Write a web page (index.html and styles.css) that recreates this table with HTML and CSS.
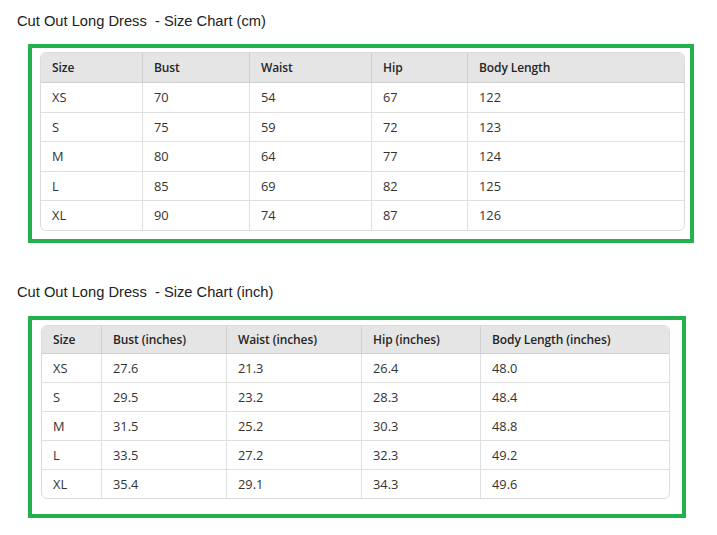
FILE: index.html
```html
<!DOCTYPE html>
<html lang="en">
<head>
<meta charset="utf-8">
<title>Cut Out Long Dress - Size Chart</title>
<link rel="stylesheet" href="styles.css">
</head>
<body>
<div class="page">
  <h2 class="title title-cm">Cut Out Long Dress&nbsp; - Size Chart (cm)</h2>
  <div class="frame frame-cm">
    <table class="chart chart-cm">
      <colgroup><col><col><col><col><col></colgroup>
      <thead>
        <tr><th>Size</th><th>Bust</th><th>Waist</th><th>Hip</th><th>Body Length</th></tr>
      </thead>
      <tbody>
        <tr><td>XS</td><td>70</td><td>54</td><td>67</td><td>122</td></tr>
        <tr><td>S</td><td>75</td><td>59</td><td>72</td><td>123</td></tr>
        <tr><td>M</td><td>80</td><td>64</td><td>77</td><td>124</td></tr>
        <tr><td>L</td><td>85</td><td>69</td><td>82</td><td>125</td></tr>
        <tr><td>XL</td><td>90</td><td>74</td><td>87</td><td>126</td></tr>
      </tbody>
    </table>
  </div>

  <h2 class="title title-inch">Cut Out Long Dress&nbsp; - Size Chart (inch)</h2>
  <div class="frame frame-inch">
    <table class="chart chart-inch">
      <colgroup><col><col><col><col><col></colgroup>
      <thead>
        <tr><th>Size</th><th>Bust (inches)</th><th>Waist (inches)</th><th>Hip (inches)</th><th>Body Length (inches)</th></tr>
      </thead>
      <tbody>
        <tr><td>XS</td><td>27.6</td><td>21.3</td><td>26.4</td><td>48.0</td></tr>
        <tr><td>S</td><td>29.5</td><td>23.2</td><td>28.3</td><td>48.4</td></tr>
        <tr><td>M</td><td>31.5</td><td>25.2</td><td>30.3</td><td>48.8</td></tr>
        <tr><td>L</td><td>33.5</td><td>27.2</td><td>32.3</td><td>49.2</td></tr>
        <tr><td>XL</td><td>35.4</td><td>29.1</td><td>34.3</td><td>49.6</td></tr>
      </tbody>
    </table>
  </div>
</div>
</body>
</html>
```

FILE: styles.css
```css
html, body {
  margin: 0;
  padding: 0;
  background: #ffffff;
}

.page {
  padding: 13px 0 0 16px;
}

.title {
  margin: 0 0 0 1px;
  font-family: "Liberation Sans", Arial, sans-serif;
  font-size: 14.7px;
  font-weight: normal;
  line-height: 16px;
  color: #222222;
}

.title-inch {
  margin-top: 41px;
}

.frame {
  box-sizing: border-box;
  margin-left: 12px;
  border: 4px solid #22b14c;
}

.frame-cm {
  margin-top: 15px;
  width: 666px;
  padding: 4px 7px 8px 8px;
}

.frame-inch {
  margin-top: 16px;
  width: 658px;
  padding: 5px 14px 15px 9px;
}

.chart {
  border-collapse: separate;
  border-spacing: 0;
  table-layout: fixed;
  border: 1px solid #dcdcdc;
  border-radius: 6px;
  overflow: hidden;
  font-family: "Open Sans", "Noto Sans", sans-serif;
  font-size: 12.8px;
  color: #333333;
}

.chart-cm { width: 643px; }
.chart-inch { width: 627px; }

.chart-cm col:nth-child(1) { width: 102px; }
.chart-cm col:nth-child(2) { width: 107px; }
.chart-cm col:nth-child(3) { width: 122px; }
.chart-cm col:nth-child(4) { width: 96px; }
.chart-cm col:nth-child(5) { width: 216px; }

.chart-inch col:nth-child(1) { width: 60px; }
.chart-inch col:nth-child(2) { width: 125px; }
.chart-inch col:nth-child(3) { width: 135px; }
.chart-inch col:nth-child(4) { width: 119px; }
.chart-inch col:nth-child(5) { width: 188px; }

.chart th,
.chart td {
  padding: 0 11px;
  text-align: left;
  vertical-align: middle;
  white-space: nowrap;
  border-right: 1px solid #e0e0e0;
  border-bottom: 1px solid #e0e0e0;
}

.chart th {
  background: #e5e5e5;
  font-size: 12px;
  letter-spacing: -0.1px;
  font-weight: 600;
  color: #262626;
  border-right-color: #cfcfcf;
  border-bottom-color: #d0d0d0;
}

.chart th:last-child,
.chart td:last-child {
  border-right: none;
}

.chart tbody tr:last-child td {
  border-bottom: none;
}

.chart-cm th { height: 29px; }
.chart-cm td { height: 28.5px; }

.chart-inch th { height: 27px; }
.chart-inch td { height: 28px; }
```
